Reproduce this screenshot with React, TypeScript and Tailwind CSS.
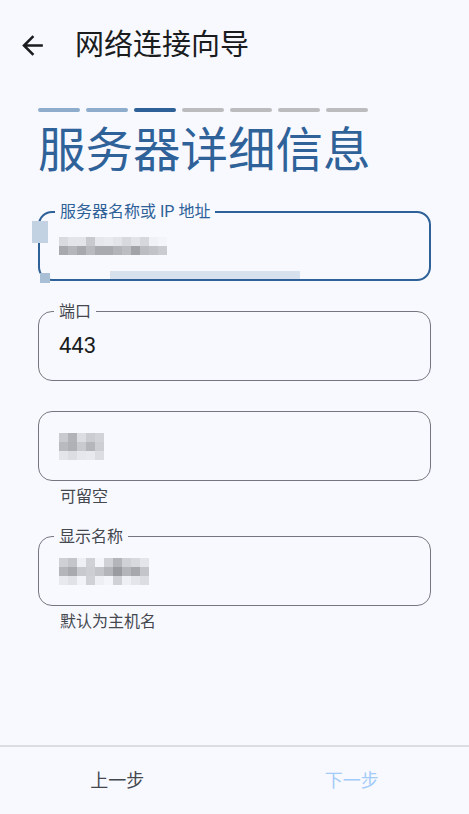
import React from "react";

const CJK = { fontFamily: 'Roboto, "Noto Sans CJK SC", sans-serif' };

function Pixels({ rows }: { rows: string[][] }) {
  return (
    <div className="flex flex-col">
      {rows.map((r, i) => (
        <div key={i} className="flex">
          {r.map((c, j) => (
            <div key={j} className="w-[9px] h-[9px]" style={{ backgroundColor: c }} />
          ))}
        </div>
      ))}
    </div>
  );
}

function Field({
  label,
  focused,
  children,
}: {
  label?: string;
  focused?: boolean;
  children: React.ReactNode;
}) {
  return (
    <div
      className={
        "relative h-[70px] rounded-[14px] flex items-center " +
        (focused ? "border-2 border-[#2d6197] pl-[19px]" : "border border-[#74777f] pl-[20px]")
      }
    >
      {label && (
        <span
          className={
            "absolute left-[15px] top-0 -translate-y-1/2 px-[5px] bg-[#f8f9ff] text-[16px] leading-[16px] " +
            (focused ? "text-[#2d6197] -mt-px" : "text-[#44474e]")
          }
        >
          {label}
        </span>
      )}
      {children}
    </div>
  );
}

export default function App() {
  const segs = ["#8eaccb", "#8eaccb", "#2d6197", "#bcbcbe", "#bcbcbe", "#bcbcbe", "#bcbcbe"];
  return (
    <div className="min-h-[814px] bg-[#f8f9ff] flex flex-col" style={CJK}>
      <div className="h-[90px] flex items-center pl-[17px]">
        <svg width="31" height="31" viewBox="0 0 24 24" fill="#1a1c1e">
          <path d="M20 11H7.83l5.59-5.59L12 4l-8 8 8 8 1.41-1.41L7.83 13H20v-2z" />
        </svg>
        <div className="ml-[27px] text-[29px] leading-none text-[#1a1c1e]">网络连接向导</div>
      </div>

      <div className="flex-1 px-[38px]">
        <div className="mt-[18px] flex gap-[6px]">
          {segs.map((c, i) => (
            <div key={i} className="w-[42px] h-[4px] rounded-full" style={{ backgroundColor: c }} />
          ))}
        </div>
        <div className="mt-[16px] h-[47px] text-[47.5px] leading-[47px] text-[#2f6299] whitespace-nowrap">
          服务器详细信息
        </div>

        <div className="mt-[36px] relative">
          <Field label="服务器名称或 IP 地址" focused>
            <Pixels
              rows={[
                ["#d9dae0", "#e3e4ea", "#e3e4ea", "#c8c9ce", "#e6e7ec", "#e9eaef", "#e3e4ea", "#d8d9de", "#e2e3e8", "#d6d7dc", "#f0f1f6", "#f4f5fa"],
                ["#a8a9ae", "#b5b6bb", "#a8a9ae", "#b9babf", "#a9aaaf", "#a9aaaf", "#b3b4b9", "#bcbdc2", "#a2a3a8", "#bcbdc2", "#c2c3c8", "#cacbd0"],
              ]}
            />
          </Field>
          <div className="absolute left-[-6px] top-[10px] w-[16px] h-[22px] bg-[#c3d2e2]" />
          <div className="absolute left-[2px] top-[62px] w-[10px] h-[10px] bg-[#a9bfd6]" />
          <div className="absolute left-[72px] top-[60px] w-[190px] h-[8px] bg-[#d6e1ed]" />
        </div>

        <div className="mt-[30px]">
          <Field label="端口">
            <span className="text-[22px] text-[#1a1c1e] leading-none">443</span>
          </Field>
        </div>

        <div className="mt-[30px]">
          <Field>
            <Pixels
              rows={[
                ["#c9cad0", "#b2b3b9", "#dcdde3", "#cbccd2", "#d2d3d9"],
                ["#b9bac0", "#b0b1b7", "#c9cad0", "#b5b6bc", "#cdced4"],
                ["#e4e5eb", "#dcdde2", "#e6e7ec", "#e8e9ee", "#dcdde2"],
              ]}
            />
          </Field>
          <div className="mt-[8px] pl-[22px] text-[16px] leading-[16px] text-[#44474e]">可留空</div>
        </div>

        <div className="mt-[31px]">
          <Field label="显示名称">
            <Pixels
              rows={[
                ["#cfd0d5", "#c4c5ca", "#eeeff4", "#d0d1d6", "#f4f5fa", "#d0d1d6", "#b4b5ba", "#d0d1d6", "#d8d9de", "#e4e5ea"],
                ["#b4b5ba", "#a9aaaf", "#c8c9ce", "#cdced3", "#c4c5ca", "#b4b5ba", "#9a9ba0", "#b4b5ba", "#a7a8ad", "#c4c5ca"],
                ["#e8e9ee", "#e1e2e7", "#f2f3f8", "#d0d1d6", "#eeeff4", "#f4f5fa", "#d0d1d6", "#eeeff4", "#e4e5ea", "#dcdde2"],
              ]}
            />
          </Field>
          <div className="mt-[8px] pl-[22px] text-[16px] leading-[16px] text-[#44474e]">默认为主机名</div>
        </div>
      </div>

      <div className="h-[69px] border-t-2 border-[#dcdde3] grid grid-cols-2 items-center text-[18px]">
        <div className="text-center text-[#44474e]">上一步</div>
        <div className="text-center text-[#a3cbf8]">下一步</div>
      </div>
    </div>
  );
}
